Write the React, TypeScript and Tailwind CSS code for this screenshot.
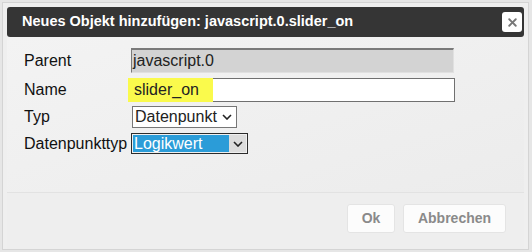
import { X } from "lucide-react";

function Chevron({ className }: { className?: string }) {
  return (
    <svg viewBox="0 0 10 6" className={className} fill="none" stroke="currentColor" strokeWidth="1.6">
      <polyline points="1,1 5,5 9,1" />
    </svg>
  );
}

export default function App() {
  const font = { fontFamily: '"Liberation Sans", Arial, sans-serif' };

  return (
    <div className="w-[532px] h-[252px] bg-[#e6e6e6] pl-[2px] pt-[2px]" style={font}>
      <div className="w-[527px] h-[248px] border border-[#d4d4d4] bg-[#efefef] px-[4px] pt-[4px] flex flex-col">
        {/* Title bar */}
        <div className="h-[30px] bg-[#353535] rounded-[3px] flex items-center justify-between pl-[15px] pr-[2px]">
          <span className="text-white font-bold text-[14.5px]">Neues Objekt hinzufügen: javascript.0.slider_on</span>
          <button className="w-[20px] h-[20px] bg-white rounded-[3px] flex items-center justify-center text-[#777]">
            <X className="w-[13px] h-[13px]" strokeWidth={3.5} />
          </button>
        </div>

        {/* Form */}
        <div className="flex-1 bg-gradient-to-br from-[#f3f3f3] to-[#ececec] pl-[17px] pt-[11px] text-[16px] text-[#111]">
          <div className="flex items-center h-[25px]">
            <span className="w-[107px]">Parent</span>
            <div className="w-[323px] h-[25px] bg-[#d3d3d3] border-t-2 border-l border-[#7a7a7a] border-r border-b border-r-[#e0e0e0] border-b-[#e0e0e0] flex items-center pl-[1px] text-[#222]">
              javascript.0
            </div>
          </div>

          <div className="flex items-center h-[24px] mt-[5px]">
            <span className="w-[107px]">Name</span>
            <div className="relative w-[324px] h-[24px] bg-white border border-[#707070] flex items-center pl-[2px]">
              <div className="absolute left-[-4px] top-[-1px] w-[85px] h-[24px] bg-[#fafa4c]" />
              <span className="relative text-[#222]">slider_on</span>
            </div>
          </div>

          <div className="flex items-center h-[22px] mt-[4px]">
            <span className="w-[108px]">Typ</span>
            <div className="w-[105px] h-[22px] bg-white border border-[#767676] flex items-center justify-between pl-[2px] pr-[4px] text-[#222]">
              <span>Datenpunkt</span>
              <Chevron className="w-[10px] h-[6px] text-[#222]" />
            </div>
          </div>

          <div className="flex items-center h-[21px] mt-[5px]">
            <span className="w-[107px]">Datenpunkttyp</span>
            <div className="w-[117px] h-[21px] border border-[#2b2b2b] flex p-[1px]">
              <div className="w-[96px] bg-[#2b9cd8] text-white flex items-center pl-[1px]">Logikwert</div>
              <div className="flex-1 bg-[#dcdcdc] flex items-center justify-center">
                <Chevron className="w-[10px] h-[6px] text-[#222]" />
              </div>
            </div>
          </div>
        </div>

        {/* Button pane */}
        <div className="h-[57px] border-t border-[#e2e2e2] bg-[#eeeeee] flex items-start justify-end gap-[8px] pt-[11px] pr-[18px]">
          <button className="w-[48px] h-[29px] bg-[#fcfcfc] border border-[#e4e4e4] rounded-[3px] text-[#8a8a8a] font-bold text-[14px]">
            Ok
          </button>
          <button className="w-[103px] h-[29px] bg-[#fcfcfc] border border-[#e4e4e4] rounded-[3px] text-[#8a8a8a] font-bold text-[14px]">
            Abbrechen
          </button>
        </div>
      </div>
    </div>
  );
}
